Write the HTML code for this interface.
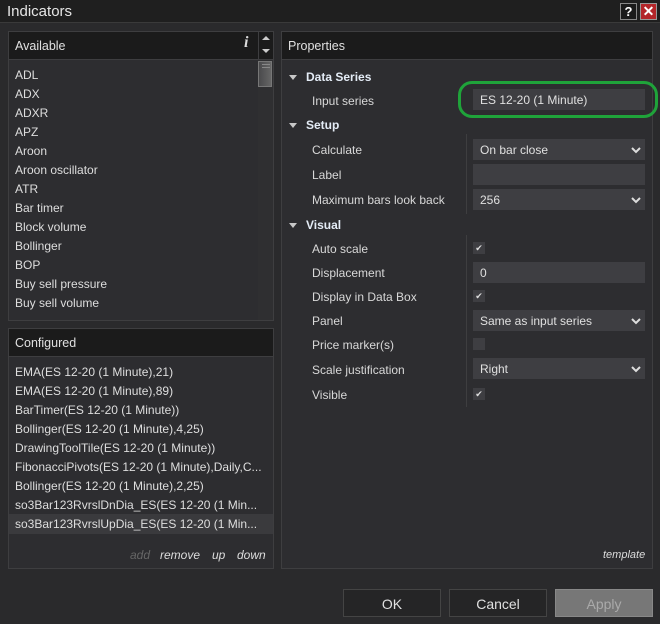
<!DOCTYPE html>
<html><head><meta charset="utf-8"><style>
*{margin:0;padding:0;box-sizing:border-box}
body{width:660px;height:624px;background:#2a2a2c;font-family:"Liberation Sans",Arial,sans-serif;font-size:12px;color:#dcdcdc;position:relative;overflow:hidden}
.a{position:absolute;white-space:nowrap}
.title{left:0;top:0;width:660px;height:23px;background:#1f1f1f;border-bottom:1px solid #3a3a3a}
.panel{border:1px solid #3e3e40;background:#2d2d30}
.hdr{background:#1b1b1b;border-bottom:1px solid #3e3e40;height:28px;line-height:28px;padding-left:6px;font-size:12.5px;color:#e0e0e0}
.item{left:15px;font-size:12px;color:#dedede}
.lbl{left:312px;color:#d8d8d8}
.sec{left:306px;font-weight:bold;color:#e4ecf6}
.tri{left:289px;width:0;height:0;border-left:4px solid transparent;border-right:4px solid transparent;border-top:5px solid #c8c8c8}
.inp{left:473px;width:172px;height:21px;background:#3e3e42;line-height:23px;padding-left:7px;color:#e0e0e0}
.chev{position:absolute;right:4px;top:6px}
.cb{left:473px;width:12px;height:12px;background:#3e3e42;font-size:9px;line-height:12px;text-align:center;color:#ddd}
.btn{top:589px;width:98px;height:28px;border:1px solid #444;background:#252526;text-align:center;line-height:28px;font-size:14px;color:#e0e0e0}
</style></head><body>
<div class="a title"></div>
<div class="a" style="left:7px;top:3px;font-size:15px;color:#e6e6e6">Indicators</div>
<div class="a" style="left:620px;top:3px;width:17px;height:17px;background:#1a1a1a;border:1px solid #888;color:#fff;font-weight:bold;font-size:13px;text-align:center;line-height:15px">?</div>
<div class="a" style="left:640px;top:3px;width:17px;height:17px;background:#b3262a;border:1px solid #999;color:#fff;font-weight:bold;font-size:14px;text-align:center;line-height:15px">✕</div>

<div class="a panel" style="left:8px;top:31px;width:266px;height:290px">
<div class="hdr">Available</div></div>
<div class="a" style="left:244px;top:34px;font-family:'Liberation Serif',serif;font-style:italic;font-weight:bold;font-size:16px;color:#ddd">i</div>
<div class="a" style="left:258px;top:32px;width:1px;height:27px;background:#3e3e40"></div>
<div class="a" style="left:262px;top:36px;border-left:4px solid transparent;border-right:4px solid transparent;border-bottom:4px solid #ccc"></div>
<div class="a" style="left:262px;top:49px;border-left:4px solid transparent;border-right:4px solid transparent;border-top:4px solid #ccc"></div>
<div class="a" style="left:258px;top:60px;width:15px;height:260px;background:#2f2f31"></div>
<div class="a" style="left:258px;top:61px;width:14px;height:26px;background:linear-gradient(90deg,#4a4a4c,#666);border:1px solid #777"></div>
<div class="a" style="left:262px;top:64px;width:8px;height:1px;background:#888"></div>
<div class="a" style="left:262px;top:67px;width:8px;height:1px;background:#888"></div>
<div class="a item" style="top:68px">ADL</div>
<div class="a item" style="top:87px">ADX</div>
<div class="a item" style="top:106px">ADXR</div>
<div class="a item" style="top:125px">APZ</div>
<div class="a item" style="top:144px">Aroon</div>
<div class="a item" style="top:163px">Aroon oscillator</div>
<div class="a item" style="top:182px">ATR</div>
<div class="a item" style="top:201px">Bar timer</div>
<div class="a item" style="top:220px">Block volume</div>
<div class="a item" style="top:239px">Bollinger</div>
<div class="a item" style="top:258px">BOP</div>
<div class="a item" style="top:277px">Buy sell pressure</div>
<div class="a item" style="top:296px">Buy sell volume</div>

<div class="a panel" style="left:8px;top:328px;width:266px;height:241px">
<div class="hdr">Configured</div></div>
<div class="a" style="left:9px;top:514px;width:264px;height:20px;background:#3a3a3d"></div>
<div class="a item" style="top:365px">EMA(ES 12-20 (1 Minute),21)</div>
<div class="a item" style="top:384px">EMA(ES 12-20 (1 Minute),89)</div>
<div class="a item" style="top:403px">BarTimer(ES 12-20 (1 Minute))</div>
<div class="a item" style="top:422px">Bollinger(ES 12-20 (1 Minute),4,25)</div>
<div class="a item" style="top:441px">DrawingToolTile(ES 12-20 (1 Minute))</div>
<div class="a item" style="top:460px">FibonacciPivots(ES 12-20 (1 Minute),Daily,C...</div>
<div class="a item" style="top:479px">Bollinger(ES 12-20 (1 Minute),2,25)</div>
<div class="a item" style="top:498px">so3Bar123RvrslDnDia_ES(ES 12-20 (1 Min...</div>
<div class="a item" style="top:517px">so3Bar123RvrslUpDia_ES(ES 12-20 (1 Min...</div>
<div class="a" style="left:130px;top:548px;font-style:italic;color:#666">add</div>
<div class="a" style="left:160px;top:548px;font-style:italic;color:#ddd">remove</div>
<div class="a" style="left:212px;top:548px;font-style:italic;color:#ddd">up</div>
<div class="a" style="left:237px;top:548px;font-style:italic;color:#ddd">down</div>

<div class="a panel" style="left:281px;top:31px;width:372px;height:538px">
<div class="hdr">Properties</div></div>
<div class="a" style="left:466px;top:134px;width:1px;height:80px;background:#3e3e40"></div>
<div class="a" style="left:466px;top:235px;width:1px;height:172px;background:#3e3e40"></div>
<div class="a tri" style="top:75px"></div><div class="a sec" style="top:70px">Data Series</div>
<div class="a lbl" style="top:94px">Input series</div>
<div class="a inp" style="top:89px">ES 12-20 (1 Minute)</div>
<div class="a" style="left:458px;top:81px;width:200px;height:37px;border:3px solid #1fa33a;border-radius:14px"></div>
<div class="a tri" style="top:123px"></div><div class="a sec" style="top:118px">Setup</div>
<div class="a lbl" style="top:143px">Calculate</div>
<div class="a inp" style="top:139px">On bar close<svg class="chev" width="10" height="10" viewBox="0 0 10 10"><path d="M1 3l4 4 4-4" stroke="#ddd" stroke-width="2" fill="none"/></svg></div>
<div class="a lbl" style="top:168px">Label</div>
<div class="a inp" style="top:164px"></div>
<div class="a lbl" style="top:193px">Maximum bars look back</div>
<div class="a inp" style="top:189px">256<svg class="chev" width="10" height="10" viewBox="0 0 10 10"><path d="M1 3l4 4 4-4" stroke="#ddd" stroke-width="2" fill="none"/></svg></div>
<div class="a tri" style="top:223px"></div><div class="a sec" style="top:218px">Visual</div>
<div class="a lbl" style="top:242px">Auto scale</div>
<div class="a cb" style="top:242px">✔</div>
<div class="a lbl" style="top:266px">Displacement</div>
<div class="a inp" style="top:262px">0</div>
<div class="a lbl" style="top:290px">Display in Data Box</div>
<div class="a cb" style="top:290px">✔</div>
<div class="a lbl" style="top:314px">Panel</div>
<div class="a inp" style="top:310px">Same as input series<svg class="chev" width="10" height="10" viewBox="0 0 10 10"><path d="M1 3l4 4 4-4" stroke="#ddd" stroke-width="2" fill="none"/></svg></div>
<div class="a lbl" style="top:338px">Price marker(s)</div>
<div class="a cb" style="top:338px"></div>
<div class="a lbl" style="top:363px">Scale justification</div>
<div class="a inp" style="top:358px">Right<svg class="chev" width="10" height="10" viewBox="0 0 10 10"><path d="M1 3l4 4 4-4" stroke="#ddd" stroke-width="2" fill="none"/></svg></div>
<div class="a lbl" style="top:388px">Visible</div>
<div class="a cb" style="top:388px">✔</div>
<div class="a" style="left:603px;top:549px;font-style:italic;font-size:11px;color:#ddd">template</div>

<div class="a btn" style="left:343px">OK</div>
<div class="a btn" style="left:449px">Cancel</div>
<div class="a btn" style="left:555px;background:#777;border-color:#888;color:#aaa">Apply</div>
</body></html>
